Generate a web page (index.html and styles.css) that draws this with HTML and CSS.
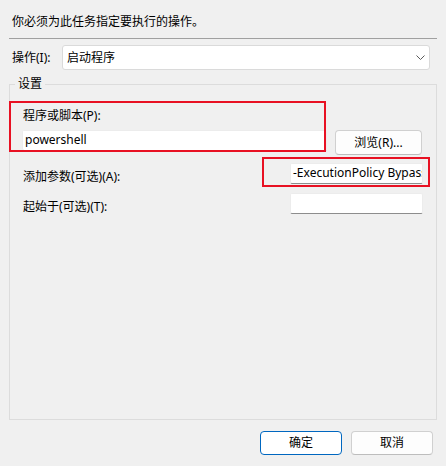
FILE: index.html
```html
<!DOCTYPE html>
<html lang="zh-CN">
<head>
<meta charset="utf-8">
<link rel="stylesheet" href="styles.css">
</head>
<body>
<div class="page">
  <div class="intro">你必须为此任务指定要执行的操作。</div>
  <div class="sep"></div>
  <div class="action-row">
    <span class="lbl">操作(I):</span>
    <div class="combo">
      <span>启动程序</span>
      <svg class="chev" width="9" height="5" viewBox="0 0 9 5"><polyline points="0.5,0.5 4.5,4.5 8.5,0.5" fill="none" stroke="#5a5a5a" stroke-width="1"/></svg>
    </div>
  </div>
  <fieldset class="group">
    <legend>设置</legend>
    <div class="group-body">
      <div class="lbl prog-lbl">程序或脚本(P):</div>
      <div class="prog-row">
        <div class="tb tb-wide">powershell</div>
        <div class="btn btn-browse">浏览(R)...</div>
      </div>
      <div class="field-row">
        <span class="lbl">添加参数(可选)(A):</span>
        <div class="tb tb-narrow">-ExecutionPolicy Bypass -File</div>
      </div>
      <div class="field-row">
        <span class="lbl">起始于(可选)(T):</span>
        <div class="tb tb-narrow"></div>
      </div>
    </div>
  </fieldset>
  <div class="footer">
    <div class="btn btn-ok">确定</div>
    <div class="btn">取消</div>
  </div>
  <div class="mark mark-1"></div>
  <div class="mark mark-2"></div>
</div>
</body>
</html>
```
FILE: styles.css
```css
* { box-sizing: border-box; }
html, body {
  margin: 0;
  padding: 0;
  background: #f0f0f0;
}
body {
  font-family: "Noto Sans", "Noto Sans CJK SC", sans-serif;
  font-size: 12px;
  line-height: 16px;
  color: #000;
}
.page {
  position: relative;
  width: 446px;
  height: 466px;
  display: flex;
  flex-direction: column;
}
.intro {
  padding: 14px 0 0 12px;
  height: 30px;
}
.sep {
  margin: 8px 9px 0 9px;
  height: 1px;
  background: #a0a0a0;
}
.action-row {
  margin-top: 6px;
  display: flex;
  align-items: center;
  padding: 0 16px 0 12px;
  gap: 0;
}
.action-row .lbl {
  width: 50px;
}
.combo {
  flex: 1;
  height: 25px;
  background: #fff;
  border: 1px solid #dadada;
  border-radius: 3px;
  display: flex;
  align-items: center;
  justify-content: space-between;
  padding: 0 4px 0 4px;
}
.chev { margin-right: 0; }
.group {
  margin: 6px 9px 0 9px;
  padding: 0;
  border: 1px solid #dcdcdc;
  flex: 1;
  min-width: 0;
}
.group legend {
  margin-left: 5px;
  padding: 0 3px;
  line-height: 16px;
}
.group-body {
  padding: 16px 13px 0 12px;
}
.prog-lbl { padding-left: 1px; }
.prog-row {
  margin-top: 6px;
  display: flex;
  align-items: flex-start;
  gap: 8px;
}
.tb {
  height: 21px;
  background: #fff;
  border: 1px solid #ececec;
  border-bottom-color: #8d8d8d;
  border-radius: 2px;
  padding: 1px 0 0 2px;
  white-space: nowrap;
  overflow: hidden;
}
.tb-wide { width: 305px; }
.tb-narrow { width: 133px; }
.field-row {
  margin-top: 8px;
  display: flex;
  justify-content: space-between;
  align-items: flex-start;
}
.field-row .lbl {
  padding: 6px 0 0 1px;
}
.btn {
  width: 82px;
  height: 24px;
  background: #fdfdfd;
  border: 1px solid #d0d0d0;
  border-bottom-color: #bdbdbd;
  border-radius: 4px;
  display: flex;
  align-items: center;
  justify-content: center;
}
.btn-browse {
  width: 87px;
  height: 25px;
}
.btn-ok {
  border: 1px solid #0067c0;
  background: #fff;
}
.footer {
  margin-top: 11px;
  padding: 0 13px 11px 0;
  display: flex;
  justify-content: flex-end;
  gap: 9px;
}
.mark {
  position: absolute;
  border: 2px solid #e81123;
}
.mark-1 {
  left: 9px;
  top: 101px;
  width: 317px;
  height: 51px;
}
.mark-2 {
  left: 262px;
  top: 157px;
  width: 168px;
  height: 30px;
}
```
